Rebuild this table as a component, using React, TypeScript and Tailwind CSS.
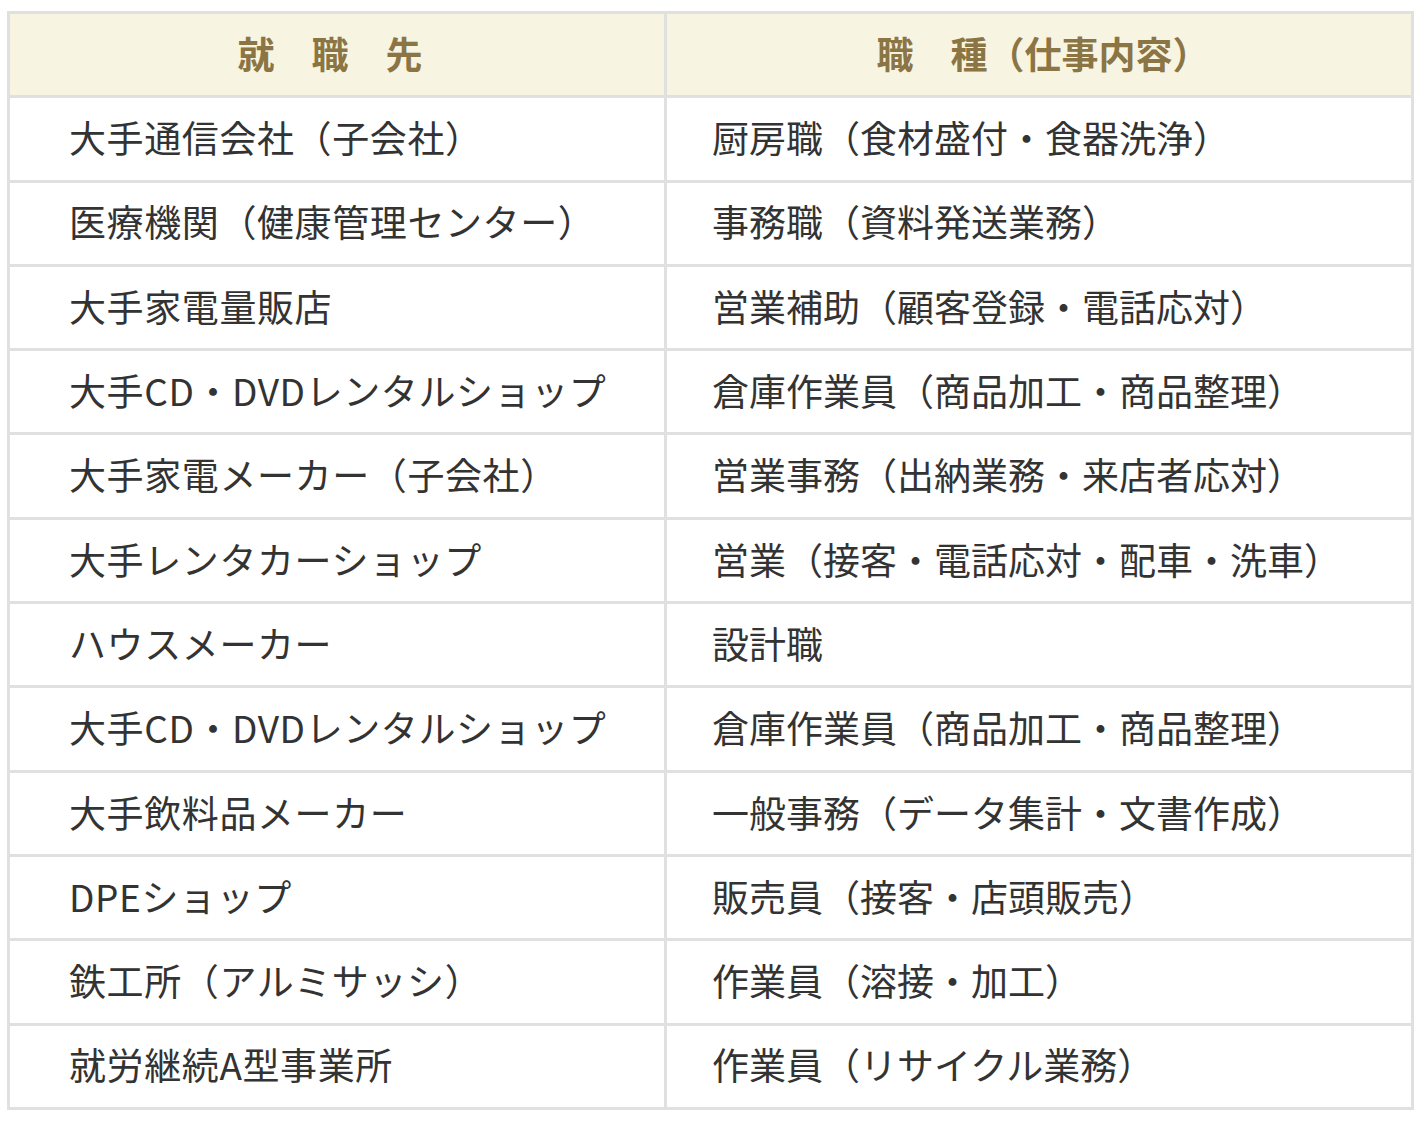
const rows: [string, string][] = [
  ['大手通信会社（子会社）', '厨房職（食材盛付・食器洗浄）'],
  ['医療機関（健康管理センター）', '事務職（資料発送業務）'],
  ['大手家電量販店', '営業補助（顧客登録・電話応対）'],
  ['大手CD・DVDレンタルショップ', '倉庫作業員（商品加工・商品整理）'],
  ['大手家電メーカー（子会社）', '営業事務（出納業務・来店者応対）'],
  ['大手レンタカーショップ', '営業（接客・電話応対・配車・洗車）'],
  ['ハウスメーカー', '設計職'],
  ['大手CD・DVDレンタルショップ', '倉庫作業員（商品加工・商品整理）'],
  ['大手飲料品メーカー', '一般事務（データ集計・文書作成）'],
  ['DPEショップ', '販売員（接客・店頭販売）'],
  ['鉄工所（アルミサッシ）', '作業員（溶接・加工）'],
  ['就労継続A型事業所', '作業員（リサイクル業務）'],
]

export default function App() {
  return (
    <div className="min-h-screen bg-white pl-[7px] pt-[11px] font-['Noto_Sans_CJK_JP',sans-serif] [text-spacing-trim:space-all]">
      <div className="w-[1407px] border-l-[3px] border-t-[3px] border-[#e0e0e0]">
        <div className="grid h-[84.3px] grid-cols-[657px_1fr] bg-[#f7f4e2] text-[37px] font-bold text-[#8b7544]">
          <div className="flex items-center justify-center border-b-[3px] border-r-[3px] border-[#e0e0e0] pb-[2px] pr-[14px]">
            就　職　先
          </div>
          <div className="flex items-center justify-center border-b-[3px] border-r-[3px] border-[#e0e0e0] pb-[2px] pl-[8px]">
            職　種（仕事内容）
          </div>
        </div>
        {rows.map(([place, job], i) => (
          <div key={i} className="grid h-[84.3px] grid-cols-[657px_1fr] text-[37px] text-[#333333]">
            <div className="flex items-center border-b-[3px] border-r-[3px] border-[#e0e0e0] pb-[2px] pl-[59px] tracking-[0.6px]">
              {place}
            </div>
            <div className="flex items-center border-b-[3px] border-r-[3px] border-[#e0e0e0] pb-[2px] pl-[45px]">
              {job}
            </div>
          </div>
        ))}
      </div>
    </div>
  )
}
